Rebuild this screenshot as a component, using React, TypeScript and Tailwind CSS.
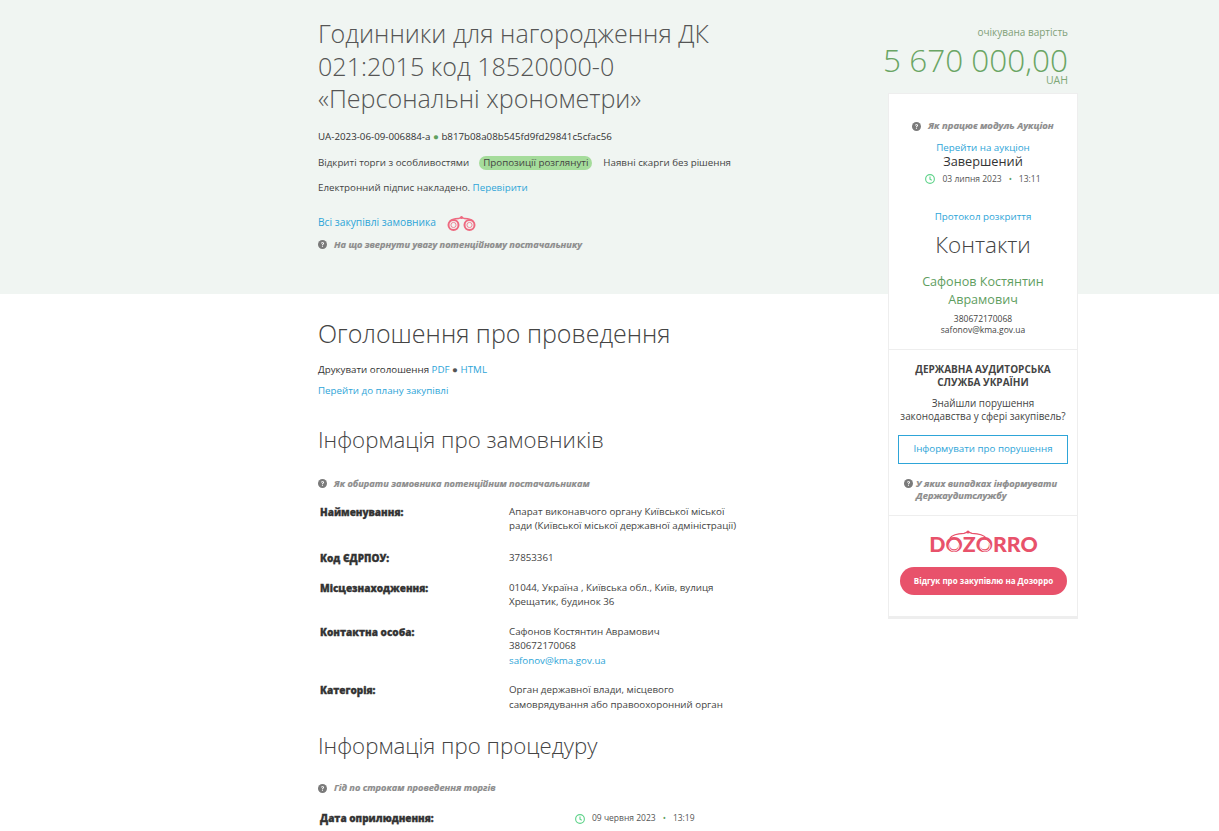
import React from "react";

const font = "font-['Open_Sans',sans-serif]";

const HelpIcon = ({ className = "" }: { className?: string }) => (
  <svg viewBox="0 0 16 16" className={`w-[9px] h-[9px] shrink-0 ${className}`}>
    <circle cx="8" cy="8" r="8" fill="#7a7a7a" />
    <path
      d="M5.4 6.2c.1-1.6 1.2-2.4 2.7-2.4 1.5 0 2.6.9 2.6 2.2 0 1-.6 1.5-1.3 2-.6.4-.8.6-.8 1.3H7c0-1.1.3-1.6 1.1-2.1.6-.4.9-.7.9-1.1 0-.5-.4-.8-.9-.8-.6 0-1 .3-1.1 1H5.4z"
      fill="#fff"
    />
    <rect x="7" y="10.3" width="1.7" height="1.8" fill="#fff" />
  </svg>
);

const ClockIcon = () => (
  <svg viewBox="0 0 16 16" className="w-[10px] h-[10px] shrink-0" fill="none" stroke="#5fd38a" strokeWidth="1.8">
    <circle cx="8" cy="8" r="7" />
    <path d="M8 3.8V8.4l2.8 1.6" />
  </svg>
);

const Binoculars = ({ className = "" }: { className?: string }) => (
  <svg viewBox="0 0 30 16" className={className} fill="none" stroke="#ee6a80">
    <circle cx="7" cy="10" r="5" strokeWidth="2" />
    <circle cx="7" cy="10" r="2.6" strokeWidth="0.8" />
    <circle cx="23" cy="10" r="5" strokeWidth="2" />
    <circle cx="23" cy="10" r="2.6" strokeWidth="0.8" />
    <path d="M3 7C5 4 9 3.6 12 3.6L15 2.4 18 3.6C21 3.6 25 4 27 7" strokeWidth="1.5" />
    <circle cx="15" cy="2.4" r="1.5" fill="#ee6a80" stroke="none" />
  </svg>
);

const Tip = ({ text, className = "" }: { text: string; className?: string }) => (
  <div className={`flex items-center gap-[7px] italic font-bold text-[#8c8c8c] [-webkit-text-stroke:0.2px_#8c8c8c] ${className}`}>
    <HelpIcon />
    <span>{text}</span>
  </div>
);

const Row = ({ label, className = "", children }: { label: string; className?: string; children: React.ReactNode }) => (
  <div className={`flex ${className}`}>
    <div className="w-[191px] pl-[2px] shrink-0 text-[10px] leading-[15px] font-extrabold text-[#333] [-webkit-text-stroke:0.3px_#333]">
      {label}
    </div>
    <div className="w-[240px] text-[9.75px] leading-[14.5px] text-[#444]">{children}</div>
  </div>
);

const LogoO = () => (
  <span className="relative inline-block">
    O
    <svg viewBox="0 0 16 16" className="absolute left-[0.8px] top-[3.5px] w-[16px] h-[16px]" fill="none" stroke="#fff" strokeWidth="0.9">
      <circle cx="8" cy="8" r="5" />
    </svg>
  </span>
);

const DozorroLogo = () => (
  <div className="relative h-[24px] w-[106px] flex items-end justify-center">
    <span className="text-[21.3px] leading-[20px] font-black text-[#e8526b] font-['Lato',sans-serif] whitespace-nowrap">
      D<LogoO />Z<LogoO />RRO
    </span>
    <svg viewBox="0 0 40 9" className="absolute left-[17px] top-0 w-[40px] h-[9px]" fill="none" stroke="#e8526b" strokeWidth="1.3">
      <path d="M2 8C5 4 11 3.6 16 3.4L20 2l4 1.4C29 3.6 35 4 38 8" />
      <circle cx="20" cy="2" r="1.6" fill="#e8526b" stroke="none" />
    </svg>
  </div>
);

export default function App() {
  return (
    <div className={`${font} h-screen overflow-hidden bg-[linear-gradient(#f0f5f2_294px,#fff_294px)] text-[#444]`}>
      <div className="ml-[318px] w-[760px] flex items-start">
        <div className="w-[570px] shrink-0">
          <div className="h-[294px] pt-[17px]">
            <h1 className="w-[420px] text-[25.1px] leading-[32.5px] font-light text-[#555]">
              Годинники для нагородження ДК 021:2015 код 18520000-0 «Персональні хронометри»
            </h1>
            <p className="mt-[15px] text-[9.75px] leading-[14px] text-[#333]">
              UA-2023-06-09-006884-a <span className="text-[#5fa05f]">●</span> b817b08a08b545fd9fd29841c5cfac56
            </p>
            <div className="mt-[12px] flex items-center text-[9.75px] leading-[14px] text-[#444]">
              <span>Відкриті торги з особливостями</span>
              <span className="ml-[10px] rounded-full bg-[#a5dc9b] px-[4px] text-[#444]">Пропозиції розглянуті</span>
              <span className="ml-[11px]">Наявні скарги без рішення</span>
            </div>
            <p className="mt-[11px] text-[9.75px] leading-[14px]">
              Електронний підпис накладено. <a className="text-[#2ea5d8]">Перевірити</a>
            </p>
            <div className="mt-[20px] flex items-center h-[14px]">
              <a className="text-[10.25px] leading-[14px] text-[#2ea5d8]">Всі закупівлі замовника</a>
              <Binoculars className="ml-[10px] mt-[2px] w-[31px] h-[16px]" />
            </div>
            <Tip text="На що звернути увагу потенційному постачальнику" className="mt-[9px] text-[9.25px]" />
          </div>

          <h2 className="mt-[23px] text-[25px] leading-[32px] font-light text-[#444]">Оголошення про проведення</h2>
          <p className="mt-[14px] text-[9.75px] leading-[14px] text-[#333]">
            Друкувати оголошення <a className="text-[#2ea5d8]">PDF</a> <span className="text-[#555]">●</span>{" "}
            <a className="text-[#2ea5d8]">HTML</a>
          </p>
          <p className="mt-[7px] text-[9.75px] leading-[14px]">
            <a className="text-[#2ea5d8]">Перейти до плану закупівлі</a>
          </p>

          <h2 className="mt-[27px] text-[22.25px] leading-[30px] font-light text-[#444]">Інформація про замовників</h2>
          <Tip text="Як обирати замовника потенційним постачальникам" className="mt-[22px] text-[9.25px]" />

          <Row label="Найменування:" className="mt-[14px]">
            Апарат виконавчого органу Київської міської ради (Київської міської державної адміністрації)
          </Row>
          <Row label="Код ЄДРПОУ:" className="mt-[17px]">37853361</Row>
          <Row label="Місцезнаходження:" className="mt-[15px]">
            01044, Україна , Київська обл., Київ, вулиця Хрещатик, будинок 36
          </Row>
          <Row label="Контактна особа:" className="mt-[15px]">
            <div>Сафонов Костянтин Аврамович</div>
            <div>380672170068</div>
            <a className="text-[#2ea5d8]">safonov@kma.gov.ua</a>
          </Row>
          <Row label="Категорія:" className="mt-[15px]">
            Орган державної влади, місцевого самоврядування або правоохоронний орган
          </Row>

          <h2 className="mt-[19px] text-[22.25px] leading-[30px] font-light text-[#444]">Інформація про процедуру</h2>
          <Tip text="Гід по строкам проведення торгів" className="mt-[20px] text-[9.25px]" />
          <div className="mt-[16px] flex items-center">
            <div className="w-[257px] pl-[2px] shrink-0 text-[10px] leading-[15px] font-extrabold text-[#333] [-webkit-text-stroke:0.3px_#333]">
              Дата оприлюднення:
            </div>
            <ClockIcon />
            <span className="ml-[7px] text-[8.5px] text-[#555]">09 червня 2023</span>
            <span className="ml-[7px] text-[8.5px] text-[#5fa05f]">•</span>
            <span className="ml-[7px] text-[8.5px] text-[#555]">13:19</span>
          </div>
        </div>

        <aside className="w-[190px] shrink-0">
          <div className="pt-[25px] pr-[10px] flex flex-col items-end text-[#6aa564]">
            <div className="text-[10px] leading-[14px] text-[#7f9f78]">очікувана вартість</div>
            <div className="mt-[7px] -ml-[10px] text-[31.5px] leading-[28px] font-light whitespace-nowrap">5 670 000,00</div>
            <div className="text-[10.5px] leading-[12px] text-[#7fa878]">UAH</div>
          </div>

          <div className="mt-[7px] bg-white border border-[#eee] border-b-[3px] text-center">
            <div className="pt-[25px] pb-[14px] px-[10px]">
              <div className="flex justify-center">
                <Tip text="Як працює модуль Аукціон" className="text-[9.5px]" />
              </div>
              <a className="block mt-[8px] text-[9.75px] leading-[14px] text-[#2ea5d8]">Перейти на аукціон</a>
              <div className="-mt-[1px] text-[12.75px] leading-[14px] text-[#333]">Завершений</div>
              <div className="mt-[4px] flex items-center justify-center text-[8.5px] leading-[14px] text-[#555]">
                <ClockIcon />
                <span className="ml-[7px]">03 липня 2023</span>
                <span className="ml-[7px] text-[#5fa05f]">•</span>
                <span className="ml-[7px]">13:11</span>
              </div>
              <a className="block mt-[24px] text-[9.75px] leading-[14px] text-[#2ea5d8]">Протокол розкриття</a>
              <div className="mt-[4px] text-[22.5px] leading-[34px] font-light text-[#444]">Контакти</div>
              <div className="mt-[11px] text-[12.6px] leading-[18px] text-[#5f9e5f]">Сафонов Костянтин Аврамович</div>
              <div className="mt-[4px] text-[8.5px] leading-[11px] text-[#444]">380672170068</div>
              <div className="text-[8.5px] leading-[11px] text-[#444]">safonov@kma.gov.ua</div>
            </div>

            <div className="border-t border-[#eee] px-[9px] pt-[13px] pb-[13px]">
              <div className="text-[10px] leading-[13px] font-bold text-[#444]">ДЕРЖАВНА АУДИТОРСЬКА СЛУЖБА УКРАЇНИ</div>
              <div className="mt-[8px] text-[9.9px] leading-[13px] text-[#444]">
                Знайшли порушення законодавства у сфері закупівель?
              </div>
              <div className="mt-[12px] h-[29px] border border-[#2ea5d8] flex items-center justify-center text-[9.75px] text-[#2ea5d8]">
                Інформувати про порушення
              </div>
              <div className="mt-[14px] flex text-left pl-[6px] text-[9.3px] leading-[12px] italic font-bold text-[#8c8c8c] [-webkit-text-stroke:0.2px_#8c8c8c]">
                <HelpIcon className="mt-[1px] mr-[3px]" />
                <span>У яких випадках інформувати Держаудитслужбу</span>
              </div>
            </div>

            <div className="border-t border-[#eee] pl-[11px] pr-[10px] pt-[14px] pb-[21px] flex flex-col items-center">
              <DozorroLogo />
              <div className="mt-[13px] w-full h-[28px] rounded-full bg-[#e8526b] flex items-center justify-center text-[8px] font-bold text-white">
                Відгук про закупівлю на Дозорро
              </div>
            </div>
          </div>
        </aside>
      </div>
    </div>
  );
}
